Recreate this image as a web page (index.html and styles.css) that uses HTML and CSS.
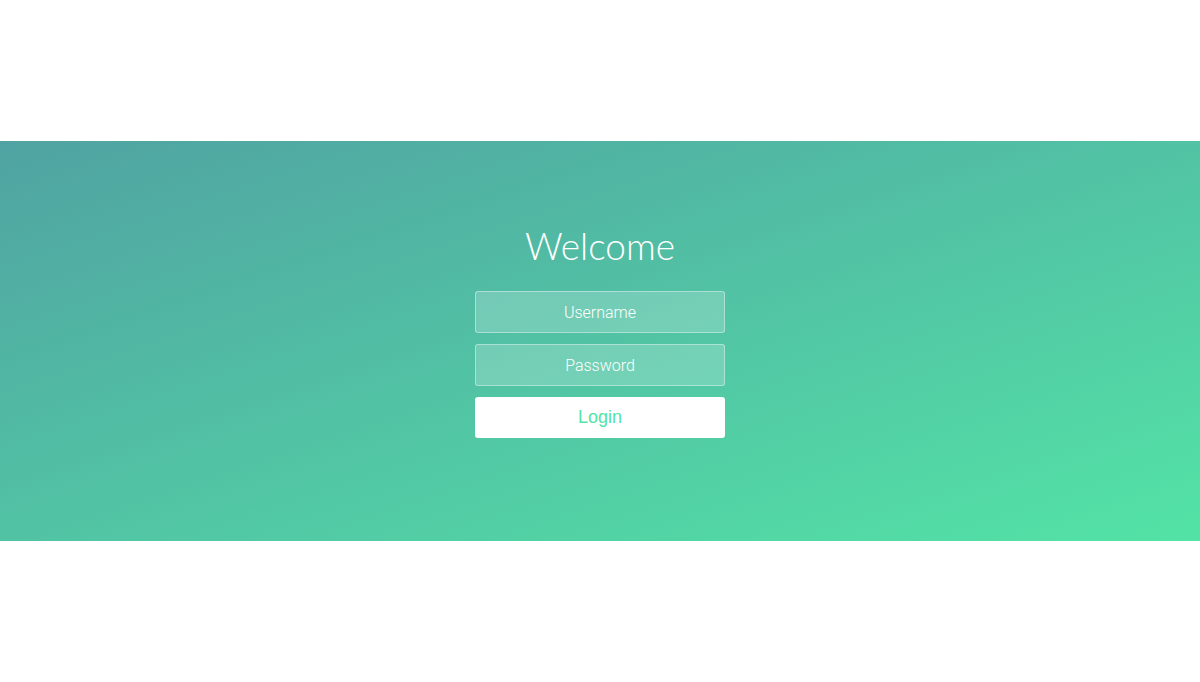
FILE: index.html
```html
<!DOCTYPE html>
<html>
<head>
<meta charset="utf-8">
<link rel="stylesheet" href="styles.css">
</head>
<body>
<div class="wrapper">
  <div class="container">
    <h1 class="title">Welcome</h1>
    <form class="form">
      <input class="field" type="text" placeholder="Username">
      <input class="field" type="password" placeholder="Password">
      <button class="login" type="button">Login</button>
    </form>
  </div>
</div>
</body>
</html>
```
FILE: styles.css
```css
html, body {
  margin: 0;
  padding: 0;
  background: #fff;
}
.wrapper {
  margin-top: 141px;
  height: 400px;
  background: linear-gradient(to bottom right, #50a3a2 0%, #53e3a6 100%);
  display: flex;
  flex-direction: column;
  align-items: center;
}
.container {
  padding-top: 80px;
  display: flex;
  flex-direction: column;
  align-items: center;
}
.title {
  margin: 0 0 20px 0;
  font-family: Lato, sans-serif;
  font-weight: 300;
  font-size: 37px;
  line-height: 50px;
  color: #fff;
}
.form {
  display: flex;
  flex-direction: column;
  align-items: center;
  gap: 11px;
  margin: 0;
}
.field {
  box-sizing: border-box;
  width: 250px;
  height: 42px;
  margin: 0;
  padding: 0 15px;
  border: 1px solid rgba(255,255,255,0.4);
  background: rgba(255,255,255,0.2);
  border-radius: 3px;
  text-align: center;
  font-family: Roboto, sans-serif;
  font-weight: 300;
  font-size: 16px;
  color: #fff;
  outline: none;
}
.field::placeholder {
  color: #fff;
  opacity: 1;
}
.login {
  box-sizing: border-box;
  width: 250px;
  height: 41px;
  margin: 0;
  border: 0;
  border-radius: 3px;
  background: #fff;
  color: #53e3a6;
  font-family: "Liberation Sans", Arial, sans-serif;
  font-size: 18px;
  cursor: pointer;
}
```
